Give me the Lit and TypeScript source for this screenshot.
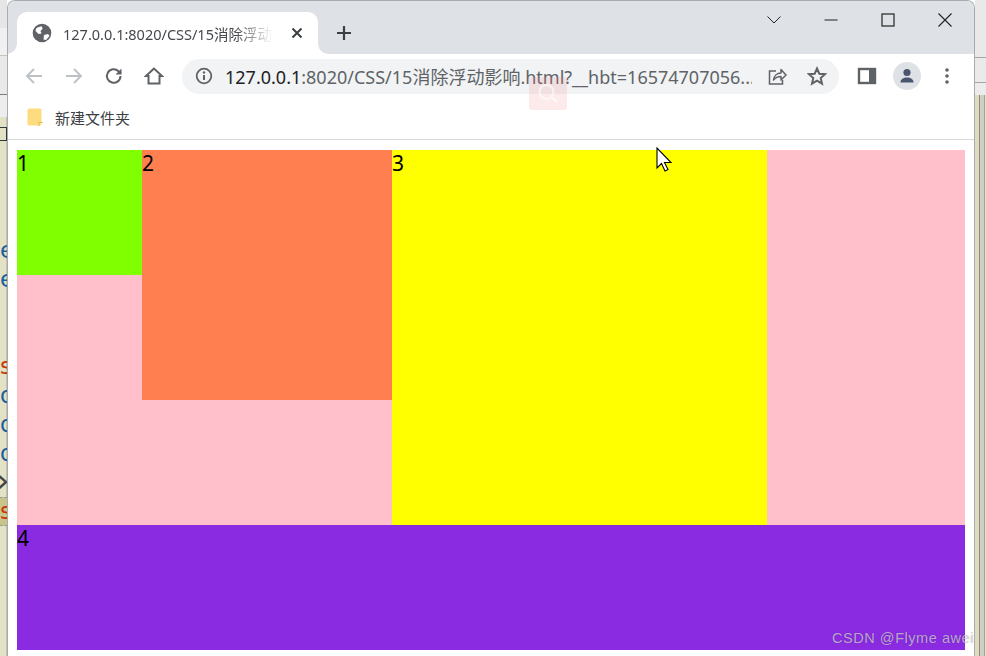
import { LitElement, html, css, svg } from "lit";
import { customElement } from "lit/decorators.js";

const LEFT_ROWS: [string, string][] = [
  ["e", "blue"], ["e", "blue"], ["", ""], ["", ""], ["s", "red"],
  ["d", "blue"], ["d", "blue"], ["d", "blue"], ["›", "dark"], ["s", "red hl"],
];

@customElement("app-root")
export class AppRoot extends LitElement {
  static styles = css`
    :host { display: block; width: 986px; height: 656px; overflow: hidden; position: relative; font-family: "Noto Sans", "Noto Sans CJK SC", sans-serif; background: #fff; }
    .screen { display: flex; height: 656px; }

    .left { width: 7px; flex: none; display: flex; flex-direction: column; overflow: hidden; box-shadow: inset -1px 0 0 #b9b9a8; }
    .l1 { height: 28px; background: #e6e6e6; }
    .l2 { height: 27px; background: #f0f0f0; border-bottom: 1px solid #c4c4c4; box-sizing: content-box; }
    .l3 { height: 38px; background: #e9e9e9; border-bottom: 1.5px solid #7d7d7d; }
    .l4 { height: 22px; background: #ededed; }
    .l5 { flex: 1; background: #e4e2c4; display: flex; flex-direction: column; align-items: flex-end; padding-top: 10px; box-shadow: inset -1px 0 0 #c2c2b0; }
    .mark { height: 12px; width: 7px; border: 1.5px solid #2f3a3a; border-left: 0; box-sizing: content-box; }
    .rows { margin-top: 95px; width: 7px; display: flex; flex-direction: column; }
    .row { height: 29px; width: 7px; font: 23px/29px "DejaVu Sans", sans-serif; overflow: hidden; display: flex; justify-content: flex-start; }
    .row span { display: block; margin-left: 0; }
    .row.dark { font-size: 34px; line-height: 24px; }
    .row.dark span { margin-left: -4px; }
    .blue { color: #1a5f9e; }
    .red { color: #c9380c; }
    .dark { color: #444; }
    .hl { background: #c9c48a; border-top: 1px dashed #999; border-bottom: 1px dashed #999; box-sizing: border-box; line-height: 27px; }

    .window { width: 968px; flex: none; border: 1px solid #a9abae; border-bottom: 0; border-radius: 8px 8px 0 0; box-sizing: border-box; display: flex; flex-direction: column; overflow: hidden; background: #fff; }
    .titlebar { height: 53px; flex: none; background: #dee1e6; display: flex; align-items: flex-end; padding-left: 9px; position: relative; }
    .tab { width: 301px; height: 42px; background: #fff; border-radius: 10px 10px 0 0; display: flex; align-items: center; padding: 0 14px 0 15px; box-sizing: border-box; gap: 11px; position: relative; }
    .tab::before, .tab::after { content: ""; position: absolute; bottom: 0; width: 10px; height: 10px; }
    .tab::before { left: -10px; background: radial-gradient(circle at 0 0, #dee1e6 9.5px, #fff 10px); }
    .tab::after { right: -10px; background: radial-gradient(circle at 100% 0, #dee1e6 9.5px, #fff 10px); }
    .tab-title { flex: 1; white-space: nowrap; overflow: hidden; font-size: 14.5px; color: #45484c; -webkit-mask-image: linear-gradient(to right, #000 80%, transparent 97%); mask-image: linear-gradient(to right, #000 80%, transparent 97%); }
    .newtab { margin-left: 14px; width: 24px; height: 42px; display: flex; align-items: center; justify-content: center; }
    .winctl { margin-left: auto; margin-right: 0.5px; display: flex; align-self: flex-start; padding-top: 9px; }
    .winctl div { width: 57px; height: 20px; display: flex; align-items: center; justify-content: center; }

    .toolbar { height: 44px; flex: none; display: flex; align-items: center; padding: 0 7px 0 6px; box-sizing: border-box; background: #fff; }
    .slot { width: 40px; height: 40px; flex: none; display: flex; align-items: center; justify-content: center; }
    .omni { flex: 1; min-width: 0; height: 35px; margin: 0 8px; border-radius: 18px; background: #f1f3f4; display: flex; align-items: center; padding: 0 12px 0 13px; box-sizing: border-box; }
    .url { margin-left: 12px; width: 527px; white-space: nowrap; overflow: hidden; font-size: 18px; color: #5f6368; }
    .url b { font-weight: 400; color: #202124; }
    .omni-icons { margin-left: auto; display: flex; gap: 20px; align-items: center; }
    .avatar { width: 28px; height: 28px; border-radius: 50%; background: #dee1e6; display: flex; align-items: center; justify-content: center; overflow: hidden; }

    .bookmarks { flex: none; display: flex; align-items: center; padding: 0 0 3px 19px; gap: 12px; border-bottom: 1px solid #d9d9d9; box-sizing: border-box; height: 42px; font-size: 15px; color: #3c4043; }

    .page { flex: 1; padding: 10px 9px 0 9px; background: #fff; }
    .page-in { width: 948px; font-size: 21px; line-height: 26px; color: #000; font-family: "Noto Sans", sans-serif; }
    .upper { height: 375px; background: #ffc0cb; display: flex; align-items: flex-start; }
    .b1 { width: 125px; height: 125px; background: #7fff00; }
    .b2 { width: 250px; height: 250px; background: #ff7f50; }
    .b3 { width: 375px; height: 375px; background: #ffff00; }
    .b4 { height: 125px; background: #8a2be2; }

    .right { width: 11px; flex: none; display: flex; flex-direction: column; overflow: hidden; }
    .r1 { height: 57px; background: #e9e9e9; border-bottom: 1px solid #a6a6a6; box-sizing: content-box; }
    .r2 { height: 24px; background: #eaeaea; border-bottom: 1px solid #a6a6a6; box-sizing: content-box; }
    .r3 { height: 12px; background: #ececec; }
    .r4 { flex: 1; display: flex; }
    .c1 { width: 4px; background: #dedcc0; border-right: 1px solid #8d8d85; box-sizing: content-box; }
    .c2 { width: 4px; background: #cfcfc4; border-right: 1px solid #a3a39a; box-sizing: content-box; }
    .c3 { flex: 1; background: #e4e2c4; }

    .ghost { position: absolute; left: 529px; top: 77px; width: 38px; height: 33px; border-radius: 3px; background: rgba(243, 130, 130, 0.17); display: flex; align-items: center; justify-content: center; }
    .ghost svg { opacity: 0.6; }
    .cursor { position: absolute; left: 656px; top: 147px; }
    .watermark { position: absolute; left: 832px; top: 629px; font: 14.5px/18px "Liberation Sans", sans-serif; letter-spacing: 0.55px; color: rgba(255, 255, 255, 0.62); text-shadow: 0 0 1px rgba(0, 0, 0, 0.45); white-space: nowrap; }
  `;

  private icon(size: number, body: unknown, vb = 24) {
    return html`<svg width=${size} height=${size} viewBox="0 0 ${vb} ${vb}" fill="none">${body}</svg>`;
  }

  render() {
    return html`
      <div class="screen">
        <div class="left">
          <div class="l1"></div><div class="l2"></div><div class="l3"></div><div class="l4"></div>
          <div class="l5">
            <div class="mark"></div>
            <div class="rows">
              ${LEFT_ROWS.map(([t, c]) => html`<div class="row ${c}"><span>${t}</span></div>`)}
            </div>
          </div>
        </div>

        <div class="window">
          <div class="titlebar">
            <div class="tab">
              ${this.icon(20, svg`<circle cx="10" cy="10" r="9.3" fill="#5f6368"/><path d="M4 5.500c2-1.500 4-2 6-2l.5 2.500-2 2 1 2.500-3 .5L3.500 8zM12 12l4-1 1.500 2-3.500 4-2.500-.5z" fill="#fff"/>`, 20)}
              <div class="tab-title">127.0.0.1:8020/CSS/15消除浮动影响.html</div>
              ${this.icon(14, svg`<path d="M2.500 2.500l9 9M11.500 2.500l-9 9" stroke="#3c4043" stroke-width="2"/>`, 14)}
            </div>
            <div class="newtab">
              ${this.icon(18, svg`<path d="M9 2v14M2 9h14" stroke="#3c4043" stroke-width="2.200"/>`, 18)}
            </div>
            <div class="winctl">
              <div>${this.icon(16, svg`<path d="M1.500 4.500L8 11l6.500-6.500" stroke="#222" stroke-width="1"/>`, 16)}</div>
              <div>${this.icon(16, svg`<path d="M1.500 8h13" stroke="#222" stroke-width="1.200"/>`, 16)}</div>
              <div>${this.icon(16, svg`<rect x="2" y="2" width="12" height="12" stroke="#222" stroke-width="1.200"/>`, 16)}</div>
              <div>${this.icon(16, svg`<path d="M1.500 1.500l13 13M14.500 1.500l-13 13" stroke="#222" stroke-width="1.100"/>`, 16)}</div>
            </div>
          </div>

          <div class="toolbar">
            <div class="slot">${this.icon(20, svg`<path d="M18 10H3M10 3l-7 7 7 7" stroke="#bdc1c6" stroke-width="1.900"/>`, 20)}</div>
            <div class="slot">${this.icon(20, svg`<path d="M2 10h15M10 3l7 7-7 7" stroke="#bdc1c6" stroke-width="1.900"/>`, 20)}</div>
            <div class="slot">${this.icon(20, svg`<path d="M16.500 10a6.800 6.800 0 1 1-2-4.800L17 7.500" stroke="#5f6368" stroke-width="2"/><path d="M17.500 2.500v6h-6z" fill="#5f6368"/>`, 20)}</div>
            <div class="slot">${this.icon(20, svg`<path d="M10 2.500L2 10h2.500v7.500h11V10H18z" stroke="#5f6368" stroke-width="2" stroke-linejoin="miter"/>`, 20)}</div>
            <div class="omni">
              ${this.icon(18, svg`<circle cx="9" cy="9" r="7.300" stroke="#5f6368" stroke-width="1.800"/><path d="M9 8v5" stroke="#5f6368" stroke-width="2"/><circle cx="9" cy="5.500" r="1.200" fill="#5f6368"/>`, 18)}
              <div class="url"><b>127.0.0.1</b>:8020/CSS/15消除浮动影响.html?__hbt=16574707056...</div>
              <div class="omni-icons">
                ${this.icon(20, svg`<path d="M9 5H2.500v13h13v-4" stroke="#5f6368" stroke-width="1.500"/><path d="M6.500 14c.5-4 3.500-7 7.500-7V3.500l5 5.500-5 5v-3.500c-3 0-5.500 1-7.500 3.500z" stroke="#5f6368" stroke-width="1.500" stroke-linejoin="round"/>`, 20)}
                ${this.icon(20, svg`<path d="M10 2.500l2.300 5.200 5.700.5-4.300 3.800 1.300 5.600-5-3-5 3 1.300-5.600L2 8.200l5.700-.5z" stroke="#5f6368" stroke-width="2" stroke-linejoin="miter"/>`, 20)}
              </div>
            </div>
            <div class="slot">${this.icon(20, svg`<rect x="2" y="3" width="16" height="14" stroke="#5f6368" stroke-width="2.400" fill="#fff"/><rect x="12" y="3" width="6" height="14" fill="#5f6368"/>`, 20)}</div>
            <div class="slot"><div class="avatar">${this.icon(20, svg`<circle cx="10" cy="6.500" r="3.600" fill="#4a5670"/><path d="M3.500 16.500c0-3.500 3-5 6.500-5s6.500 1.500 6.500 5z" fill="#4a5670"/>`, 20)}</div></div>
            <div class="slot">${this.icon(20, svg`<circle cx="10" cy="4" r="1.800" fill="#5f6368"/><circle cx="10" cy="10" r="1.800" fill="#5f6368"/><circle cx="10" cy="16" r="1.800" fill="#5f6368"/>`, 20)}</div>
          </div>

          <div class="bookmarks">
            <svg width="16" height="18" viewBox="0 0 16 18"><rect x="0.500" y="0.500" width="14" height="17" rx="1.500" fill="#fddc80"/><path d="M12 18v-3.500h3.500" stroke="#e0b94e" fill="#ffe9a8"/></svg>
            <span>新建文件夹</span>
          </div>

          <div class="page">
            <div class="page-in">
              <div class="upper">
                <div class="b1">1</div>
                <div class="b2">2</div>
                <div class="b3">3</div>
              </div>
              <div class="b4">4</div>
            </div>
          </div>
        </div>

        <div class="right">
          <div class="r1"></div><div class="r2"></div><div class="r3"></div>
          <div class="r4"><div class="c1"></div><div class="c2"></div><div class="c3"></div></div>
        </div>
      </div>

      <div class="ghost">
        <svg width="26" height="26" viewBox="0 0 26 26" fill="none"><circle cx="11.500" cy="11" r="7" stroke="#fff" stroke-width="2"/><path d="M17 16.500l5 4.500" stroke="#fff" stroke-width="2.500"/></svg>
      </div>
      <svg class="cursor" width="16" height="26" viewBox="0 0 16 26"><path d="M1 1v20l4.500-4.500 3.500 7.500 3-1.500-3.500-7H15z" fill="#fff" stroke="#000" stroke-width="1.100" stroke-linejoin="miter"/></svg>
      <div class="watermark">CSDN @Flyme awei</div>
    `;
  }
}
